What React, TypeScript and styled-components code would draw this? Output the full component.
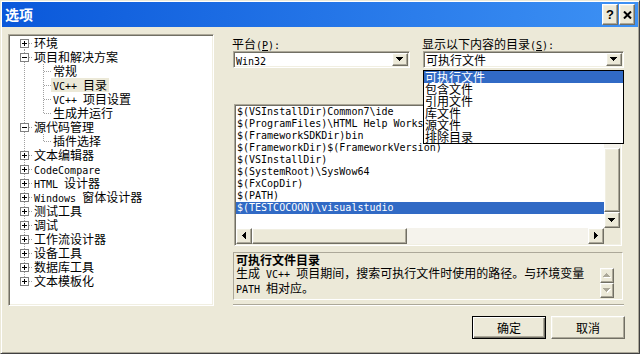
import React from "react";
import styled, { createGlobalStyle, css } from "styled-components";

const CJK = `"Noto Sans CJK SC", "Noto Sans CJK JP", sans-serif`;
const MONO = `"DejaVu Sans Mono", "Liberation Mono", monospace`;

const GlobalStyle = createGlobalStyle`
  html, body { margin: 0; padding: 0; background: #ece9d8; }
  body { font-family: ${CJK}; font-size: 12px; color: #000; }
  *, *::before, *::after { box-sizing: border-box; }
`;

const raised = css`
  border: 1px solid;
  border-color: #ffffff #716f64 #716f64 #ffffff;
  box-shadow: inset -1px -1px 0 #aca899, inset 1px 1px 0 #f1efe2;
  background: #ece9d8;
`;

const sunken = css`
  border: 1px solid;
  border-color: #aca899 #ffffff #ffffff #aca899;
  box-shadow: inset 1px 1px 0 #716f64, inset -1px -1px 0 #f1efe2;
  padding: 1px;
`;

const Window = styled.div`
  width: 640px;
  height: 354px;
  display: flex;
  flex-direction: column;
  background: #ece9d8;
  border: 1px solid;
  border-color: #ece9d8 #404040 #404040 #ece9d8;
  box-shadow: inset 1px 1px 0 #ffffff, inset -1px -1px 0 #aca899;
  padding: 1px;
  overflow: hidden;
`;

const TitleBar = styled.div`
  flex: none;
  height: 25px;
  display: flex;
  align-items: center;
  padding: 0 3px;
  background: linear-gradient(to right, #0a58da, #3d91f4);
`;

const Title = styled.div`
  flex: 1;
  color: #ffffff;
  font-weight: bold;
  font-size: 14px;
  line-height: 25px;
`;

const CapBtn = styled.div`
  ${raised};
  width: 16px;
  height: 21px;
  margin-left: 1px;
  display: flex;
  align-items: center;
  justify-content: center;
  font-family: "Liberation Sans", sans-serif;
  font-weight: bold;
  font-size: 13px;
  line-height: 1;
`;

const Body = styled.div`
  display: flex;
  padding: 7px 0 0 6px;
`;

const TreeBox = styled.div`
  ${sunken};
  flex: none;
  width: 206px;
  height: 272px;
  background: #ffffff;
  overflow: hidden;
`;

const TreeRow = styled.div`
  display: flex;
  align-items: center;
  height: 14px;
`;

const TreeLabel = styled.span<{ $sel?: boolean }>`
  height: 14px;
  line-height: 14px;
  padding: 0 2px;
  white-space: nowrap;
  background: ${(p) => (p.$sel ? "#ece9d8" : "transparent")};
`;

const Lat = styled.span`
  font-family: ${MONO};
  font-size: 10px;
`;

const RightPane = styled.div`
  flex: none;
  width: 391px;
  margin-left: 19px;
  display: flex;
  flex-direction: column;
`;

const TopGrid = styled.div`
  display: grid;
  grid-template-columns: 177px 201px;
  column-gap: 13px;
  padding-top: 3px;
`;

const Field = styled.div`
  display: flex;
  flex-direction: column;
`;

const FieldLabel = styled.div`
  height: 14px;
  line-height: 14px;
  margin-left: -1px;
  white-space: nowrap;
`;

const Combo = styled.div`
  ${sunken};
  position: relative;
  height: 17px;
  background: #ffffff;
  display: flex;
`;

const ComboValue = styled.div`
  flex: 1;
  padding-left: 1px;
  line-height: 13px;
  white-space: nowrap;
`;

const DropBtn = styled.div`
  ${raised};
  flex: none;
  width: 16px;
  height: 13px;
  display: flex;
  align-items: center;
  justify-content: center;
`;

const DropList = styled.div`
  position: absolute;
  top: 18px;
  left: -1px;
  width: 201px;
  border: 1px solid #000000;
  background: #ffffff;
  z-index: 10;
`;

const DropItem = styled.div<{ $sel?: boolean }>`
  height: 12px;
  line-height: 12px;
  padding-left: 1px;
  white-space: nowrap;
  background: ${(p) => (p.$sel ? "#316ac5" : "transparent")};
  color: ${(p) => (p.$sel ? "#ffffff" : "#000000")};
`;

const ListBox = styled.div`
  ${sunken};
  margin-top: 36px;
  margin-left: 1px;
  width: 388px;
  height: 142px;
  background: #ffffff;
  display: grid;
  grid-template-columns: 1fr 16px;
  grid-template-rows: 1fr 16px;
`;

const ListRows = styled.div`
  overflow: hidden;
  font-family: ${MONO};
  font-size: 10px;
`;

const ListRow = styled.div<{ $sel?: boolean }>`
  height: 12px;
  line-height: 12px;
  padding-left: 1px;
  white-space: nowrap;
  background: ${(p) => (p.$sel ? "#316ac5" : "transparent")};
  color: ${(p) => (p.$sel ? "#ffffff" : "#000000")};
`;

const VScroll = styled.div`
  display: flex;
  flex-direction: column;
  background: #f5f3ec;
`;

const HScroll = styled.div`
  display: flex;
  background: #f5f3ec;
`;

const Track = styled.div<{ $size?: number }>`
  flex: ${(p) => (p.$size ? `none` : `1`)};
  ${(p) => (p.$size ? `height: ${p.$size}px;` : ``)}
`;

const Thumb = styled.div<{ $w?: number }>`
  ${raised};
  ${(p) => (p.$w ? `width: ${p.$w}px; flex: none;` : `flex: 1;`)}
`;

const SBtn = styled.div<{ $w?: number; $h?: number }>`
  ${raised};
  flex: none;
  width: ${(p) => p.$w ?? 16}px;
  height: ${(p) => p.$h ?? 16}px;
  display: flex;
  align-items: center;
  justify-content: center;
`;

const Corner = styled.div`
  background: #ece9d8;
`;

const Desc = styled.div`
  margin-top: 6px;
  width: 390px;
  height: 48px;
  border: 1px solid;
  border-color: #aca899 #ffffff #ffffff #aca899;
  display: flex;
  padding-left: 2px;
`;

const DescText = styled.div`
  flex: 1;
  line-height: 13px;
  white-space: nowrap;
`;

const DescTitle = styled.div`
  font-weight: bold;
`;

const DescScroll = styled.div`
  flex: none;
  align-self: flex-end;
  display: flex;
  flex-direction: column;
  margin: 0 8px 1px 0;
`;

const Separator = styled.div`
  margin-top: 4px;
  height: 2px;
  border-top: 1px solid #aca899;
  border-bottom: 1px solid #ffffff;
`;

const Footer = styled.div`
  display: flex;
  justify-content: flex-end;
  gap: 5px;
  margin-top: 10px;
  padding-right: 13px;
`;

const PushBtn = styled.div<{ $default?: boolean }>`
  width: 74px;
  height: 23px;
  display: flex;
  align-items: center;
  justify-content: center;
  background: #ece9d8;
  ${(p) =>
    p.$default
      ? css`
          border: 1px solid #000000;
          box-shadow: inset 1px 1px 0 #ffffff, inset -1px -1px 0 #716f64,
            inset -2px -2px 0 #aca899;
        `
      : css`
          border: 1px solid;
          border-color: #ffffff #716f64 #716f64 #ffffff;
          box-shadow: inset -1px -1px 0 #aca899, inset 1px 1px 0 #f1efe2;
        `}
`;

const Svg = styled.svg`
  display: block;
  flex: none;
`;

/* ---------- helpers ---------- */

function Mixed({ text }: { text: string }) {
  const parts = text.split(/([\x20-\x7E]+)/);
  return (
    <>
      {parts.map((p, i) =>
        p === "" ? null : /^[\x20-\x7E]+$/.test(p) ? (
          <Lat key={i}>{p}</Lat>
        ) : (
          <React.Fragment key={i}>{p}</React.Fragment>
        )
      )}
    </>
  );
}

type Dir = "up" | "down" | "left" | "right";

function ArrowGlyph({ dir, disabled }: { dir: Dir; disabled?: boolean }) {
  const horiz = dir === "left" || dir === "right";
  const w = horiz ? 4 : 7;
  const h = horiz ? 7 : 4;
  const rects = [0, 1, 2, 3].map((i) => {
    switch (dir) {
      case "down":
        return { x: i, y: i, w: 7 - 2 * i, h: 1 };
      case "up":
        return { x: i, y: 3 - i, w: 7 - 2 * i, h: 1 };
      case "right":
        return { x: i, y: i, w: 1, h: 7 - 2 * i };
      default:
        return { x: 3 - i, y: i, w: 1, h: 7 - 2 * i };
    }
  });
  return (
    <Svg width={w + 1} height={h + 1} viewBox={`0 0 ${w + 1} ${h + 1}`} shapeRendering="crispEdges">
      {disabled &&
        rects.map((r, i) => (
          <rect key={`s${i}`} x={r.x + 1} y={r.y + 1} width={r.w} height={r.h} fill="#ffffff" />
        ))}
      {rects.map((r, i) => (
        <rect key={i} x={r.x} y={r.y} width={r.w} height={r.h} fill={disabled ? "#aca899" : "#000000"} />
      ))}
    </Svg>
  );
}

function CloseGlyph() {
  return (
    <Svg width="9" height="8" viewBox="0 0 9 8">
      <path d="M1 0.5 L8 7.5 M8 0.5 L1 7.5" stroke="#000" strokeWidth="2" />
    </Svg>
  );
}

type TNode = { level: number; label: string; exp?: "+" | "-"; sel?: boolean };

const TREE: TNode[] = [
  { level: 0, label: "环境", exp: "+" },
  { level: 0, label: "项目和解决方案", exp: "-" },
  { level: 1, label: "常规" },
  { level: 1, label: "VC++ 目录", sel: true },
  { level: 1, label: "VC++ 项目设置" },
  { level: 1, label: "生成并运行" },
  { level: 0, label: "源代码管理", exp: "-" },
  { level: 1, label: "插件选择" },
  { level: 0, label: "文本编辑器", exp: "+" },
  { level: 0, label: "CodeCompare", exp: "+" },
  { level: 0, label: "HTML 设计器", exp: "+" },
  { level: 0, label: "Windows 窗体设计器", exp: "+" },
  { level: 0, label: "测试工具", exp: "+" },
  { level: 0, label: "调试", exp: "+" },
  { level: 0, label: "工作流设计器", exp: "+" },
  { level: 0, label: "设备工具", exp: "+" },
  { level: 0, label: "数据库工具", exp: "+" },
  { level: 0, label: "文本模板化", exp: "+" },
];

function hasNextSibling(i: number) {
  const L = TREE[i].level;
  for (let j = i + 1; j < TREE.length; j++) {
    if (TREE[j].level < L) return false;
    if (TREE[j].level === L) return true;
  }
  return false;
}

const LINE = "#a0a0a0";

function Connector({ index }: { index: number }) {
  const node = TREE[index];
  const L = node.level;
  const cx = 14 + 19 * L;
  const w = cx + 8;
  const lines: React.ReactNode[] = [];
  for (let a = 0; a < L; a++) {
    let anc = -1;
    for (let j = index - 1; j >= 0; j--) {
      if (TREE[j].level === a) {
        anc = j;
        break;
      }
    }
    if (anc >= 0 && hasNextSibling(anc)) {
      const ax = 14 + 19 * a + 0.5;
      lines.push(<line key={`a${a}`} x1={ax} y1={0} x2={ax} y2={14} stroke={LINE} strokeDasharray="1 1" />);
    }
  }
  const top = index === 0 ? 7 : 0;
  const bottom = hasNextSibling(index) ? 14 : 7;
  lines.push(<line key="v" x1={cx + 0.5} y1={top} x2={cx + 0.5} y2={bottom} stroke={LINE} strokeDasharray="1 1" />);
  lines.push(<line key="h" x1={cx + 1} y1={7.5} x2={cx + 8} y2={7.5} stroke={LINE} strokeDasharray="1 1" />);
  if (node.exp) {
    lines.push(
      <rect key="b" x={cx - 4 + 0.5} y={3.5} width={8} height={8} fill="#ffffff" stroke="#808080" />
    );
    lines.push(<line key="m" x1={cx - 2} y1={7.5} x2={cx + 3} y2={7.5} stroke="#000" />);
    if (node.exp === "+") {
      lines.push(<line key="p" x1={cx + 0.5} y1={5} x2={cx + 0.5} y2={10} stroke="#000" />);
    }
  }
  return (
    <Svg width={w} height={14} viewBox={`0 0 ${w} 14`}>
      {lines}
    </Svg>
  );
}

const PATHS = [
  "$(VSInstallDir)Common7\\ide",
  "$(ProgramFiles)\\HTML Help Workshop",
  "$(FrameworkSDKDir)bin",
  "$(FrameworkDir)$(FrameworkVersion)",
  "$(VSInstallDir)",
  "$(SystemRoot)\\SysWow64",
  "$(FxCopDir)",
  "$(PATH)",
  "$(TESTCOCOON)\\visualstudio",
];

const DIR_KINDS = ["可执行文件", "包含文件", "引用文件", "库文件", "源文件", "排除目录"];

export default function App() {
  return (
    <>
      <GlobalStyle />
      <Window>
        <TitleBar>
          <Title>选项</Title>
          <CapBtn>?</CapBtn>
          <CapBtn>
            <CloseGlyph />
          </CapBtn>
        </TitleBar>
        <Body>
          <TreeBox>
            {TREE.map((n, i) => (
              <TreeRow key={i}>
                <Connector index={i} />
                <TreeLabel $sel={n.sel}>
                  <Mixed text={n.label} />
                </TreeLabel>
              </TreeRow>
            ))}
          </TreeBox>
          <RightPane>
            <TopGrid>
              <Field>
                <FieldLabel>
                  平台
                  <Lat>
                    (<u>P</u>):
                  </Lat>
                </FieldLabel>
                <Combo>
                  <ComboValue>
                    <Lat>Win32</Lat>
                  </ComboValue>
                  <DropBtn>
                    <ArrowGlyph dir="down" />
                  </DropBtn>
                </Combo>
              </Field>
              <Field>
                <FieldLabel>
                  显示以下内容的目录
                  <Lat>
                    (<u>S</u>):
                  </Lat>
                </FieldLabel>
                <Combo>
                  <ComboValue>可执行文件</ComboValue>
                  <DropBtn>
                    <ArrowGlyph dir="down" />
                  </DropBtn>
                  <DropList>
                    {DIR_KINDS.map((k, i) => (
                      <DropItem key={k} $sel={i === 0}>
                        {k}
                      </DropItem>
                    ))}
                  </DropList>
                </Combo>
              </Field>
            </TopGrid>
            <ListBox>
              <ListRows>
                {PATHS.map((p, i) => (
                  <ListRow key={i} $sel={i === PATHS.length - 1}>
                    {p}
                  </ListRow>
                ))}
              </ListRows>
              <VScroll>
                <SBtn>
                  <ArrowGlyph dir="up" />
                </SBtn>
                <Track $size={26} />
                <Thumb />
                <SBtn>
                  <ArrowGlyph dir="down" />
                </SBtn>
              </VScroll>
              <HScroll>
                <SBtn>
                  <ArrowGlyph dir="left" />
                </SBtn>
                <Thumb $w={155} />
                <Track />
                <SBtn>
                  <ArrowGlyph dir="right" />
                </SBtn>
              </HScroll>
              <Corner />
            </ListBox>
            <Desc>
              <DescText>
                <DescTitle>可执行文件目录</DescTitle>
                <Mixed text="生成 VC++ 项目期间，搜索可执行文件时使用的路径。与环境变量" />
                <br />
                <Mixed text="PATH 相对应。" />
              </DescText>
              <DescScroll>
                <SBtn $w={14} $h={15}>
                  <ArrowGlyph dir="up" disabled />
                </SBtn>
                <SBtn $w={14} $h={15}>
                  <ArrowGlyph dir="down" disabled />
                </SBtn>
              </DescScroll>
            </Desc>
            <Separator />
          </RightPane>
        </Body>
        <Footer>
          <PushBtn $default>确定</PushBtn>
          <PushBtn>取消</PushBtn>
        </Footer>
      </Window>
    </>
  );
}
